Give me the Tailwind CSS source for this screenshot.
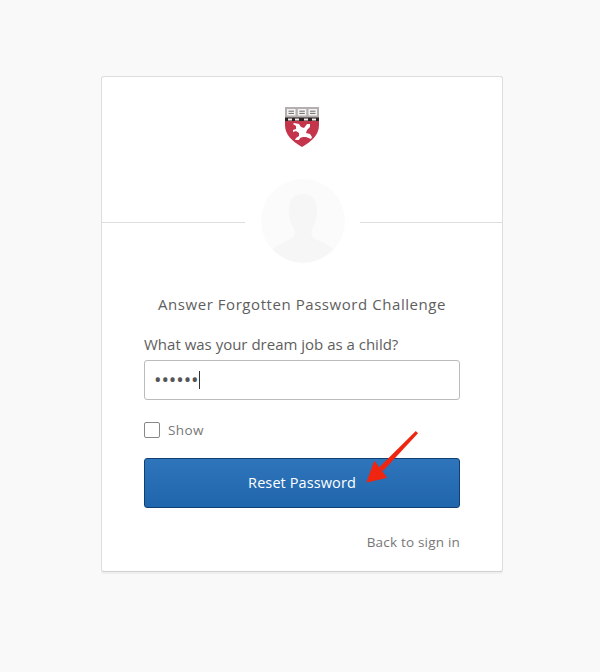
<!DOCTYPE html>
<html lang="en">
<head>
  <meta charset="UTF-8" />
  <title>Answer Forgotten Password Challenge</title>
  <script src="https://cdn.jsdelivr.net/npm/@tailwindcss/browser@4"></script>
</head>
<body class="bg-[#f9f9f9] min-h-screen font-['Open_Sans',sans-serif] text-[#5e5e5e]">
  <main class="relative pt-[76px]">
    <div class="w-[402px] h-[496px] ml-[101px] bg-white border border-[#ddd] border-b-[#d0d0d0] rounded-[3px] shadow-[0_2px_0_rgba(175,175,175,0.12)]">

      <header class="relative h-[146px] border-b border-[#ddd]">
        <div class="flex justify-center pt-[30px] pr-px">
          <svg width="34" height="40" viewBox="0 0 34 40">
            <path d="M0 0h34v18c0 10-7 16-17 22C7 34 0 28 0 18z" fill="#c4354c"/>
            <path d="M0 0h34v11H0z" fill="#b5aeae"/>
            <path d="M0 10.500h34v3.500H0z" fill="#2b2022"/>
            <path d="M3 11.500h4v2H3zM10 11.500h4v2h-4zM19 11.500h4v2h-4zM27 11.500h4v2h-4z" fill="#f4eeee"/>
            <path d="M2 2h8.500v6.500H2zM12.800 2h8.500v6.500h-8.500zM23.500 2h8.500v6.500h-8.500z" fill="#f4f1f1"/>
            <path d="M3.500 4.200h5.500M3.500 6.400h5.500M14.300 4.200h5.500M14.300 6.400h5.500M25 4.200h5.500M25 6.400h5.500" stroke="#6b6b6b" stroke-width="1"/>
            <path d="M9 16l5 1 2 3 3 1 3-4 3 0 0 3-3 3-1 3 4 1 2 3-1 2-5-2-3 0-3 1-1 2-4 0 1-2 3-2 0-3-3-2-3 1 0-2 3-1 0-3-3-2z" fill="#fff"/>
          </svg>
        </div>
        <div class="absolute left-[143px] top-[102px] w-[115px] h-[84px] bg-white flex justify-center">
          <div class="w-[84px] h-[84px] rounded-full bg-[#fbfbfc] overflow-hidden">
            <svg width="84" height="84" viewBox="0 0 84 84">
              <path d="M42 15c-9 0-14 6-14 16 0 8 2 14 5 19 1 3 1 6-1 8-4 4-14 6-20 12 7 8 18 14 30 14s23-6 30-14c-6-6-16-8-20-12-2-2-2-5-1-8 3-5 5-11 5-19 0-10-5-16-14-16z" fill="#f6f6f7"/>
            </svg>
          </div>
        </div>
      </header>

      <div class="px-[42px] pt-[71px]">
        <h2 class="text-[15px] leading-5 font-medium text-center tracking-[0.56px] text-[#5e5e5e]">Answer Forgotten Password Challenge</h2>

        <label class="block mt-[20px] text-[15px] leading-5 text-[#5e5e5e]">What was your dream job as a child?</label>
        <div class="mt-[6px] h-10 border border-[#bbb] rounded-[3px] flex items-center pl-[9px]">
          <span class="text-[20px] leading-none tracking-[-0.1px] text-[#555]">••••••</span>
          <span class="w-px h-[18px] bg-[#333]"></span>
        </div>

        <div class="mt-[22px] flex items-center gap-2 h-4">
          <span class="w-4 h-4 border border-[#888] rounded-[2px] bg-white"></span>
          <span class="text-[13.5px] tracking-[0.4px] text-[#777]">Show</span>
        </div>

        <button class="mt-5 w-full h-[50px] rounded-[3px] border border-[#0f3f73] bg-gradient-to-b from-[#2f75bb] to-[#2066ac] text-white text-[14.5px] tracking-[0.1px] font-medium">Reset Password</button>

        <div class="mt-[24px] text-right text-[13.5px] leading-5 tracking-[0.2px] text-[#777]">Back to sign in</div>
      </div>
    </div>

    <svg class="absolute left-[360px] top-[425px]" width="64" height="64" viewBox="0 0 64 64">
      <path d="M55.800 6L58 8.300L23 46L19 42.500z" fill="#f0250f"/>
      <path d="M7 57L14.500 36.500L26.500 52.500z" fill="#f0250f" stroke="#f0250f" stroke-width="1" stroke-linejoin="round"/>
    </svg>
  </main>
</body>
</html>
